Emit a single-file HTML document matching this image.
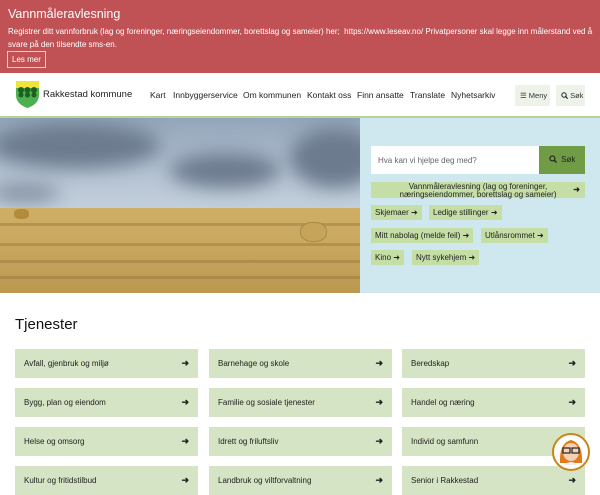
<!DOCTYPE html>
<html><head><meta charset="utf-8"><style>
*{box-sizing:border-box;margin:0;padding:0}
body{width:600px;height:480px;overflow:hidden;font-family:"Liberation Sans",sans-serif;background:#fff;color:#222;position:relative}
.banner{position:absolute;left:0;top:0;width:600px;height:73px;background:#c05256;color:#fff;padding:0 7px}
.banner h1{font-size:12.5px;font-weight:normal;position:absolute;top:7px;left:8px}
.banner p{font-size:8px;line-height:13px;position:absolute;top:25px;left:8px;width:585px}
.banner .btn{position:absolute;left:7px;top:51px;border:1px solid #f0c8c8;font-size:8px;padding:3px 4px;line-height:9px}
.header{position:absolute;top:73px;left:0;width:600px;height:45px;background:#fff;border-bottom:2px solid #b5d29a}
.logo{position:absolute;left:15px;top:7px}
.brand{position:absolute;left:43px;top:16px;font-size:9.5px;color:#222}
.nav{position:absolute;top:17px;font-size:8.5px;color:#222;white-space:nowrap}
.mb{position:absolute;top:12px;height:21px;background:#eef3ea;font-size:7.5px;line-height:21px;padding:0 5px;color:#333;white-space:nowrap}
.hero{position:absolute;top:118px;left:0;width:360px;height:175px;overflow:hidden;
background:linear-gradient(180deg,#93a5ba 0%,#b7c5d4 35%,#c9d4e0 60%,#ccd6e0 100%)}
.cloud{position:absolute;border-radius:50%;background:#6c7b8e;filter:blur(9px)}
.field{position:absolute;left:0;top:90px;width:360px;height:85px;
background:linear-gradient(180deg,#cfae66 0%,#caa85f 40%,#bb9850 100%)}
.stripe{position:absolute;left:0;width:360px;height:3px;background:rgba(125,95,45,.3)}
.panel{position:absolute;left:360px;top:118px;width:240px;height:175px;background:#cfe7ef}
.search{position:absolute;left:11px;top:28px;width:168px;height:28px;background:#fff;font-size:8px;color:#666;padding:10px 7px}
.sbtn{position:absolute;left:179px;top:28px;width:46px;height:28px;background:#6f9c45;font-size:8px;color:#222;line-height:28px;text-align:center}
.tag{position:absolute;background:#c4dea6;font-size:8px;color:#222;height:15px;line-height:15px;padding:0 4px;white-space:nowrap}
h2{position:absolute;left:15px;top:316px;font-size:15px;font-weight:normal;color:#111}
.card{position:absolute;width:183px;height:29px;background:#d5e4c4;font-size:8px;line-height:29px;padding-left:9px;color:#222}
.card b{position:absolute;right:9px;top:0;font-weight:bold;font-size:9px}
</style></head><body>
<div class="banner">
<h1>Vannmåleravlesning</h1>
<p>Registrer ditt vannforbruk (lag og foreninger, næringseiendommer, borettslag og sameier) her;&nbsp; https://www.leseav.no/ Privatpersoner skal legge inn målerstand ved å svare på den tilsendte sms-en.</p>
<div class="btn">Les mer</div>
</div>
<div class="header">
<svg class="logo" width="25" height="29" viewBox="0 0 25 29"><path d="M1 1H24V15Q24 24 12.5 28Q1 24 1 15Z" fill="#4caf50"/><path d="M1 1H24V8H1Z" fill="#f2e33a"/><g fill="#1e5e1e"><circle cx="6" cy="10" r="3"/><circle cx="12.5" cy="10" r="3"/><circle cx="19" cy="10" r="3"/><circle cx="6" cy="15" r="2.5"/><circle cx="12.5" cy="15" r="2.5"/><circle cx="19" cy="15" r="2.5"/></g></svg>
<div class="brand">Rakkestad kommune</div>
<div class="nav" style="left:150px">Kart</div>
<div class="nav" style="left:173px">Innbyggerservice</div>
<div class="nav" style="left:243px">Om kommunen</div>
<div class="nav" style="left:307px">Kontakt oss</div>
<div class="nav" style="left:357px">Finn ansatte</div>
<div class="nav" style="left:410px">Translate</div>
<div class="nav" style="left:451px">Nyhetsarkiv</div>
<div class="mb" style="left:515px;width:35px">☰ Meny</div>
<div class="mb" style="left:556px;width:29px"><svg width="7" height="7" viewBox="0 0 7 7" style="vertical-align:-1px"><circle cx="3" cy="3" r="2.2" fill="none" stroke="#222" stroke-width="1"/><path d="M4.6 4.6L6.6 6.6" stroke="#222" stroke-width="1.2"/></svg> Søk</div>
</div>
<div class="hero">
<div class="cloud" style="left:-10px;top:5px;width:170px;height:45px"></div>
<div class="cloud" style="left:170px;top:35px;width:110px;height:35px"></div>
<div class="cloud" style="left:290px;top:10px;width:90px;height:60px"></div>
<div class="cloud" style="left:-10px;top:65px;width:70px;height:20px;opacity:.7"></div>
<div class="field">
<div class="stripe" style="top:15px"></div><div class="stripe" style="top:35px"></div><div class="stripe" style="top:52px"></div><div class="stripe" style="top:68px"></div>
</div>
<div style="position:absolute;left:14px;top:91px;width:15px;height:10px;border-radius:40%;background:#b28b3c"></div>
<div style="position:absolute;left:300px;top:104px;width:27px;height:20px;border-radius:45%;background:#c6a45a;border:1px solid #a88a45"></div>
</div>
<div class="panel">
<div class="search">Hva kan vi hjelpe deg med?</div>
<div class="sbtn"><svg width="8" height="8" viewBox="0 0 7 7" style="vertical-align:-1px"><circle cx="3" cy="3" r="2.2" fill="none" stroke="#222" stroke-width="1"/><path d="M4.6 4.6L6.6 6.6" stroke="#222" stroke-width="1.2"/></svg>&nbsp; Søk</div>
<div class="tag" style="left:11px;top:64px;width:214px;height:16px;line-height:7.5px;text-align:center;padding-top:1px">Vannmåleravlesning (lag og foreninger,<br>næringseiendommer, borettslag og sameier)<span style="position:absolute;right:5px;top:4px;font-weight:bold">➜</span></div>
<div class="tag" style="left:11px;top:87px">Skjemaer ➜</div>
<div class="tag" style="left:69px;top:87px">Ledige stillinger ➜</div>
<div class="tag" style="left:11px;top:110px">Mitt nabolag (melde feil) ➜</div>
<div class="tag" style="left:121px;top:110px">Utlånsrommet ➜</div>
<div class="tag" style="left:11px;top:132px">Kino ➜</div>
<div class="tag" style="left:52px;top:132px">Nytt sykehjem ➜</div>
</div>
<h2>Tjenester</h2>
<div class="card" style="left:15px;top:349px">Avfall, gjenbruk og miljø<b>➜</b></div>
<div class="card" style="left:209px;top:349px">Barnehage og skole<b>➜</b></div>
<div class="card" style="left:402px;top:349px">Beredskap<b>➜</b></div>
<div class="card" style="left:15px;top:388px">Bygg, plan og eiendom<b>➜</b></div>
<div class="card" style="left:209px;top:388px">Familie og sosiale tjenester<b>➜</b></div>
<div class="card" style="left:402px;top:388px">Handel og næring<b>➜</b></div>
<div class="card" style="left:15px;top:427px">Helse og omsorg<b>➜</b></div>
<div class="card" style="left:209px;top:427px">Idrett og friluftsliv<b>➜</b></div>
<div class="card" style="left:402px;top:427px">Individ og samfunn<b>➜</b></div>
<div class="card" style="left:15px;top:466px">Kultur og fritidstilbud<b>➜</b></div>
<div class="card" style="left:209px;top:466px">Landbruk og viltforvaltning<b>➜</b></div>
<div class="card" style="left:402px;top:466px">Senior i Rakkestad<b>➜</b></div>
<svg style="position:absolute;left:552px;top:433px" width="38" height="38" viewBox="0 0 38 38"><circle cx="19" cy="19" r="18" fill="#fff" stroke="#c8861a" stroke-width="2"/><path d="M8 30Q7 10 19 7Q31 10 30 30Z" fill="#e07a1a"/><ellipse cx="19" cy="19" rx="8" ry="9" fill="#f6d2b4"/><rect x="11" y="15" width="7" height="5" fill="none" stroke="#222" stroke-width="1.2"/><rect x="20" y="15" width="7" height="5" fill="none" stroke="#222" stroke-width="1.2"/><path d="M12 32Q19 26 26 32Z" fill="#eee"/></svg>
</body></html>
